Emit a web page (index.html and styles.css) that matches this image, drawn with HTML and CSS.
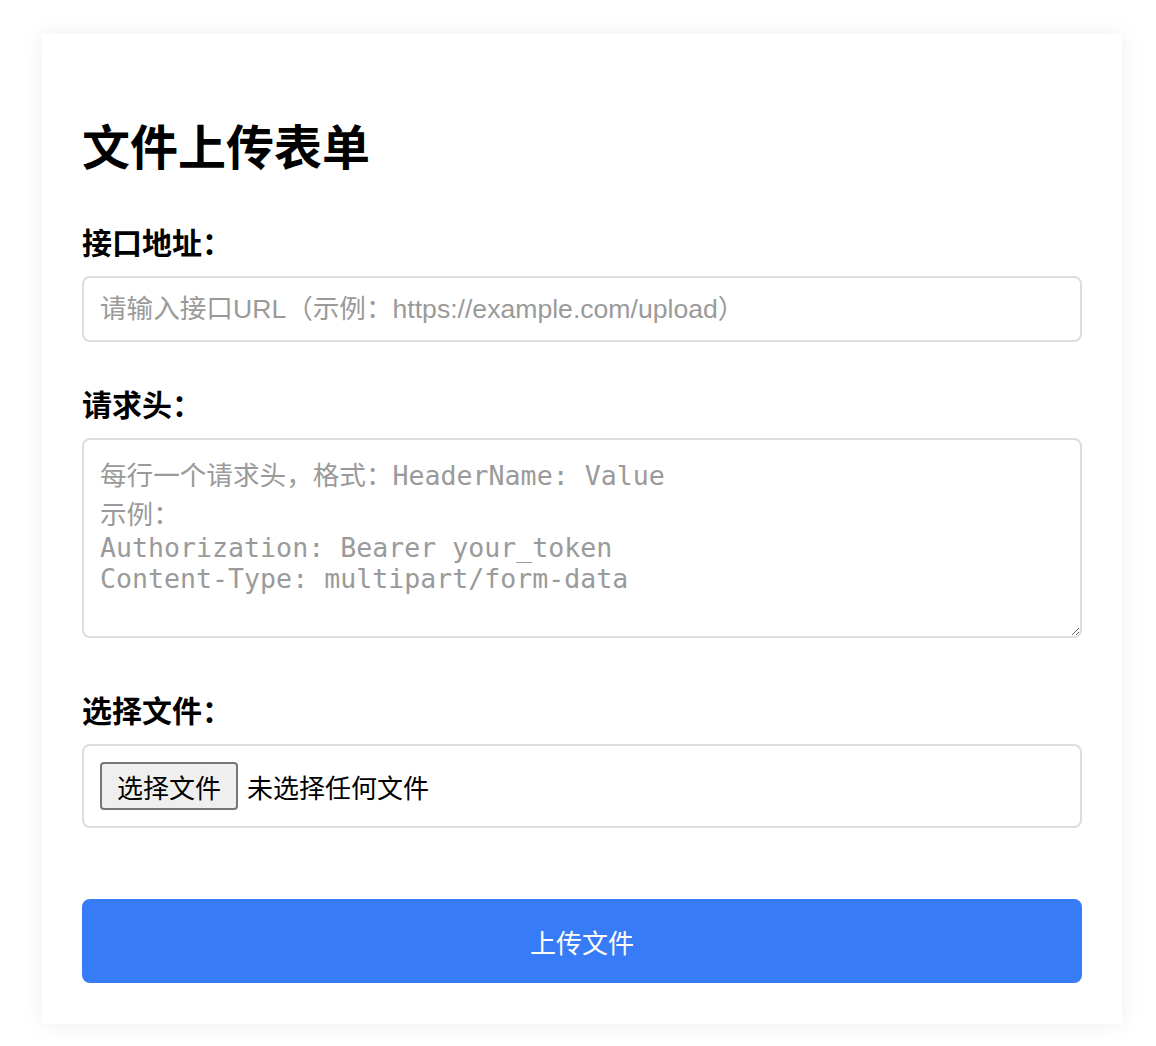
FILE: index.html
```html
<!DOCTYPE html>
<html lang="zh-CN">
  <head>
    <meta charset="UTF-8" />
    <meta name="viewport" content="width=device-width, initial-scale=1.0" />
    <title>文件上传表单</title>
    <link rel="stylesheet" href="styles.css">
  </head>
  <body>
    <div class="container">
      <h1>文件上传表单</h1>

      <form class="upload-form" onsubmit="return false">
        <div class="form-group">
          <label for="url">接口地址：</label>
          <input
            type="text"
            id="url"
            placeholder="请输入接口URL（示例：https://example.com/upload）"
          />
        </div>

        <div class="form-group">
          <label for="headers">请求头：</label>
          <textarea
            id="headers"
            placeholder="每行一个请求头，格式：HeaderName: Value
示例：
Authorization: Bearer your_token
Content-Type: multipart/form-data"
          ></textarea>
        </div>

        <div class="form-group">
          <label>选择文件：</label>
          <div class="file-box">
            <label class="file-btn">
              选择文件
              <input type="file" id="file" hidden />
            </label>
            <span class="file-name">未选择任何文件</span>
          </div>
        </div>

        <button type="submit" class="submit-btn">上传文件</button>
      </form>
    </div>
  </body>
</html>
```

FILE: styles.css
```css
/* Global Styles */
* {
  margin: 0;
  padding: 0;
  box-sizing: border-box;
  font-family: "Liberation Sans", "Noto Sans CJK SC", sans-serif;
}

body {
  background-color: #fff;
  color: #000;
}

/* Card */
.container {
  width: 1080px;
  margin: 34px 0 22px 42px;
  padding: 40px 40px 41px;
  background-color: #fff;
  box-shadow: 0 0 22px rgba(0, 0, 0, 0.07);
}

h1 {
  margin-top: 46px;
  margin-bottom: 46px;
  font-size: 48px;
  line-height: 58px;
  font-weight: 700;
}

/* Form */
.form-group {
  margin-bottom: 44px;
}

.form-group > label {
  display: block;
  margin-bottom: 12px;
  font-size: 30px;
  line-height: 40px;
  font-weight: 700;
}

.form-group input[type="text"] {
  display: block;
  width: 100%;
  height: 66px;
  padding: 0 16px;
  border: 2px solid #ddd;
  border-radius: 8px;
  font-size: 26.6px;
  color: #000;
  outline: none;
}

.form-group textarea {
  display: block;
  width: 100%;
  height: 200px;
  margin-bottom: 54px;
  padding: 14px 16px;
  border: 2px solid #ddd;
  border-radius: 8px;
  font-family: "DejaVu Sans Mono", "Noto Sans CJK SC", monospace;
  font-size: 26.6px;
  color: #000;
  outline: none;
}

input::placeholder,
textarea::placeholder {
  color: #9a9a9a;
}

/* File picker */
.file-box {
  display: flex;
  align-items: center;
  gap: 9px;
  height: 84px;
  padding: 0 16px;
  border: 2px solid #ddd;
  border-radius: 8px;
}

.file-btn {
  display: flex;
  align-items: center;
  height: 48px;
  padding: 0 15px;
  background-color: #efefef;
  border: 2px solid #767676;
  border-radius: 4px;
  font-size: 26px;
  color: #000;
  cursor: pointer;
}

.file-name {
  font-size: 26px;
  color: #000;
}

/* Submit */
.submit-btn {
  display: block;
  width: 100%;
  height: 84px;
  margin-top: 71px;
  background-color: #377bf6;
  border: none;
  border-radius: 8px;
  font-size: 26px;
  color: #fff;
  cursor: pointer;
}

.submit-btn:hover {
  background-color: #2f6fe0;
}
```
